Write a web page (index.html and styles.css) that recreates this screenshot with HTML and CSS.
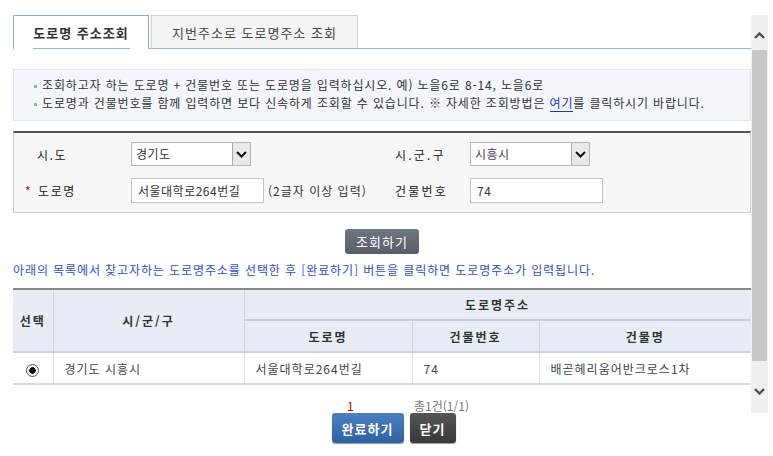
FILE: index.html
```html
<!DOCTYPE html>
<html lang="ko">
<head>
    <meta charset="UTF-8">
    <meta name="viewport" content="width=device-width, initial-scale=1.0">
    <title>도로명주소 조회</title>
    <link rel="stylesheet" href="styles.css">
</head>
<body>
    <div class="viewport">
        <div class="content">
            <div class="tabs">
                <div class="tab on">도로명 주소조회</div>
                <div class="tab">지번주소로 도로명주소 조회</div>
            </div>

            <ul class="info">
                <li>조회하고자 하는 도로명 + 건물번호 또는 도로명을 입력하십시오. 예) 노을6로 8-14, 노을6로</li>
                <li>도로명과 건물번호를 함께 입력하면 보다 신속하게 조회할 수 있습니다. ※ 자세한 조회방법은 <a href="#" class="link">여기</a>를 클릭하시기 바랍니다.</li>
            </ul>

            <div class="searchBox">
                <div class="lbl">시.도</div>
                <div>
                    <div class="select">
                        <span class="selText">경기도</span>
                        <span class="selBtn"><svg width="11" height="7" viewBox="0 0 11 7"><polyline points="1,1 5.5,5.5 10,1" fill="none" stroke="#111" stroke-width="2"/></svg></span>
                    </div>
                </div>
                <div class="lbl lbl2">시.군.구</div>
                <div>
                    <div class="select">
                        <span class="selText purple">시흥시</span>
                        <span class="selBtn"><svg width="11" height="7" viewBox="0 0 11 7"><polyline points="1,1 5.5,5.5 10,1" fill="none" stroke="#111" stroke-width="2"/></svg></span>
                    </div>
                </div>

                <div class="lbl"><span class="star">*</span>도로명</div>
                <div class="field">
                    <input type="text" class="txt" value="서울대학로264번길">
                    <span class="hint">(2글자 이상 입력)</span>
                </div>
                <div class="lbl lbl2">건물번호</div>
                <div>
                    <input type="text" class="txt" value="74">
                </div>
            </div>

            <div class="btnRow">
                <button class="btnSearch">조회하기</button>
            </div>

            <p class="guide">아래의 목록에서 찾고자하는 도로명주소를 선택한 후 [완료하기] 버튼을 클릭하면 도로명주소가 입력됩니다.</p>

            <table class="list">
                <colgroup>
                    <col style="width:40px">
                    <col style="width:191px">
                    <col style="width:168px">
                    <col style="width:127px">
                    <col style="width:212px">
                </colgroup>
                <thead>
                    <tr class="h1">
                        <th rowspan="2" class="first">선택</th>
                        <th rowspan="2">시/군/구</th>
                        <th colspan="3" class="group">도로명주소</th>
                    </tr>
                    <tr class="h2">
                        <th>도로명</th>
                        <th>건물번호</th>
                        <th class="last">건물명</th>
                    </tr>
                </thead>
                <tbody>
                    <tr>
                        <td class="first center"><span class="radio"></span></td>
                        <td>경기도 시흥시</td>
                        <td>서울대학로264번길</td>
                        <td>74</td>
                        <td class="last">배곧헤리움어반크로스1차</td>
                    </tr>
                </tbody>
            </table>

            <div class="paging">
                <span class="pageNo">1</span>
                <span class="total">총1건(1/1)</span>
            </div>
        </div>

        <div class="scrollbar">
            <div class="sbUp"><svg width="11" height="7" viewBox="0 0 11 7"><polyline points="1,6 5.5,1.5 10,6" fill="none" stroke="#505050" stroke-width="2.4"/></svg></div>
            <div class="sbThumb"></div>
            <div class="sbTrack"></div>
            <div class="sbDown"><svg width="11" height="7" viewBox="0 0 11 7"><polyline points="1,1 5.5,5.5 10,1" fill="none" stroke="#505050" stroke-width="2.4"/></svg></div>
        </div>
    </div>

    <div class="actions">
        <button class="btnOk">완료하기</button>
        <button class="btnClose">닫기</button>
    </div>
</body>
</html>
```

FILE: styles.css
```css
* {
    box-sizing: border-box;
}
body {
    margin: 0;
    width: 773px;
    height: 456px;
    overflow: hidden;
    background: #fff;
    font-family: "Noto Sans CJK KR", "Noto Sans", sans-serif;
    font-size: 12px;
    color: #333;
}

/* 스크롤 영역 */
.viewport {
    display: flex;
    height: 398px;
    margin-top: 15px;
    overflow: hidden;
}
.content {
    flex: none;
    width: 751px;
    padding-left: 13px;
}

/* 탭 */
.tabs {
    display: flex;
    align-items: flex-start;
    gap: 2px;
    height: 34px;
    border-bottom: 1px solid #9db6d6;
}
.tab {
    height: 33px;
    width: 207px;
    display: flex;
    align-items: center;
    justify-content: center;
    border: 1px solid #cfcfcf;
    border-bottom: none;
    background: #f4f4f4;
    font-size: 13px;
    letter-spacing: 1px;
    color: #444;
}
.tab.on {
    position: relative;
    width: 136px;
    height: 34px;
    margin-bottom: -1px;
    background: #fff;
    border-color: #8fa9cf;
    font-weight: bold;
    color: #333;
}
.tab.on::after {
    content: "";
    position: absolute;
    left: 19px;
    right: 18px;
    bottom: 0;
    height: 1px;
    background: #9db6d6;
}

/* 안내 */
.info {
    margin: 20px 0 0;
    padding: 6px 0 8px 20px;
    list-style: none;
    background: #f3f6fb;
    border: 1px solid #e3e8f0;
    height: 52px;
}
.info li {
    line-height: 18px;
    white-space: nowrap;
    letter-spacing: 0.85px;
}
.info li::before {
    content: "";
    display: inline-block;
    width: 3px;
    height: 3px;
    background: #aaa;
    margin-right: 5px;
    vertical-align: middle;
}
.link {
    color: #2233cc;
    text-decoration: none;
    border-bottom: 1px solid #2233cc;
}

/* 검색 폼 */
.searchBox {
    display: grid;
    grid-template-columns: 117px 264px 75px 1fr;
    row-gap: 12px;
    align-items: center;
    margin-top: 10px;
    padding: 9px 0 9px;
    background: #f7f7f7;
    border: 1px solid #d3d3d3;
    border-top: 2px solid #555;
}
.lbl {
    padding-left: 23px;
    font-size: 12px;
    letter-spacing: 1.5px;
    color: #222;
}
.lbl2 {
    padding-left: 0;
    letter-spacing: 2.2px;
}
.star {
    color: #c00;
    margin-left: -12px;
    margin-right: 6px;
}
.select {
    display: flex;
    width: 120px;
    height: 24px;
    border: 1px solid #b8b8b8;
    background: #fff;
}
.selText {
    padding-left: 4px;
    line-height: 22px;
    letter-spacing: 0.5px;
}
.purple {
    color: #4a3560;
}
.selBtn {
    margin-left: auto;
    width: 18px;
    display: flex;
    align-items: center;
    justify-content: center;
    background: #e9e9e9;
    border-left: 1px solid #aaa;
}
.field {
    display: flex;
    align-items: center;
}
.txt {
    width: 133px;
    height: 25px;
    border: 1px solid #c4c4c4;
    padding: 0 0 0 6px;
    font-family: inherit;
    font-size: 12px;
    letter-spacing: 0.5px;
    color: #333;
    background: #fff;
}
.hint {
    margin-left: 4px;
    letter-spacing: 1px;
}

/* 조회 버튼 */
.btnRow {
    display: flex;
    justify-content: center;
    margin-top: 16px;
}
button {
    font-family: inherit;
    border: none;
    cursor: pointer;
}
.btnSearch {
    width: 74px;
    height: 25px;
    border-radius: 3px;
    background: linear-gradient(#6f7680, #575e68);
    color: #fff;
    font-size: 13px;
    letter-spacing: 1px;
}

.guide {
    margin: 8px 0 0;
    line-height: 16px;
    color: #2b4fd9;
    white-space: nowrap;
    letter-spacing: 0.9px;
}

/* 목록 */
.list {
    width: 738px;
    margin-top: 10px;
    border-collapse: collapse;
    table-layout: fixed;
    border-top: 2px solid #8a8a8a;
    border-bottom: 2px solid #d5dde8;
}
.list th {
    background: #e8edf5;
    font-weight: bold;
    letter-spacing: 2px;
    color: #333;
    border: 1px solid #cdd6e2;
    padding: 0;
}
.list .h1 th {
    height: 31px;
}
.list .h1 .group {
    border-bottom: 2px solid #c4ccd7;
}
.list .h2 th {
    height: 32px;
    border-bottom: 2px solid #c8d0dc;
}
.list th[rowspan] {
    border-bottom: 2px solid #c8d0dc;
}
.list td {
    height: 32px;
    padding: 0 0 0 11px;
    border: 1px solid #e1e6ee;
    color: #444;
    letter-spacing: 1px;
}
.list .first {
    border-left: none;
}
.list .last {
    border-right: none;
}
.list .center {
    padding: 0;
    text-align: center;
}
.radio {
    display: inline-block;
    width: 13px;
    height: 13px;
    border: 1px solid #555;
    border-radius: 50%;
    background: radial-gradient(circle, #111 0 3px, #f2f2f2 3.5px);
    vertical-align: middle;
}

.paging {
    margin-top: 14px;
    padding-left: 334px;
    line-height: 14px;
    white-space: nowrap;
}
.pageNo {
    color: #c00;
}
.total {
    margin-left: 57px;
    color: #777;
}

/* 스크롤바 */
.scrollbar {
    flex: none;
    width: 17px;
    display: flex;
    flex-direction: column;
    background: #f0f0f0;
}
.sbUp {
    height: 35px;
    display: flex;
    align-items: center;
    justify-content: center;
    padding-top: 6px;
}
.sbThumb {
    height: 311px;
    margin: 0 1px;
    background: #c8c8c8;
}
.sbTrack {
    flex: 1;
}
.sbDown {
    height: 44px;
    display: flex;
    align-items: center;
    justify-content: center;
}

/* 하단 버튼 */
.actions {
    display: flex;
    justify-content: center;
    gap: 6px;
    padding-left: 14px;
}
.btnOk {
    width: 72px;
    height: 30px;
    border-radius: 3px;
    background: linear-gradient(#4a7fc0, #2f62a3);
    color: #fff;
    font-size: 13px;
    font-weight: bold;
    letter-spacing: 1px;
    box-shadow: 0 1px 1px #999;
}
.btnClose {
    width: 46px;
    height: 30px;
    border-radius: 3px;
    background: linear-gradient(#555, #383838);
    color: #fff;
    font-size: 13px;
    font-weight: bold;
    letter-spacing: 1px;
    box-shadow: 0 1px 1px #999;
}
```
